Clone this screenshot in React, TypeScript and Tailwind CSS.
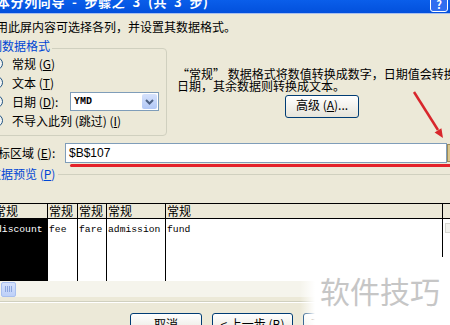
const Radio = ({ checked }: { checked?: boolean }) => (
  <div className="w-[13px] h-[13px] shrink-0 rounded-full border border-[#1C5180] bg-gradient-to-br from-[#DCDCD5] to-white flex items-center justify-center">
    {checked && <div className="w-[5px] h-[5px] rounded-full bg-[#21A121]" />}
  </div>
);

const XpButton = ({ children, className = '' }: any) => (
  <div className={`h-[23px] border border-[#003C74] rounded-[3px] bg-gradient-to-b from-white to-[#E6E4DA] flex justify-center pt-[3px] ${className}`}>
    {children}
  </div>
);

export default function App() {
  return (
    <div className="relative w-[450px] h-[325px] overflow-hidden bg-[#ECE9D8] text-[12px] leading-[14px] text-black font-['Noto_Sans_CJK_SC','Liberation_Sans',sans-serif]">
      {/* title bar */}
      <div className="h-[13px] flex items-start bg-gradient-to-b from-[#0A5EEA] to-[#0350DC]">
        <span className="-mt-[5px] -ml-[3px] text-[13px] leading-[13px] font-bold text-white whitespace-pre tracking-[0.6px]">本分列向导  -  步骤之  3  (共  3  步)</span>
        <div className="ml-auto mr-[2px] -mt-[6px] w-[18px] h-[18px] rounded-[3px] border border-white bg-[#2F6DF0] flex items-end justify-center pb-[1px] text-white font-bold text-[11px] leading-[11px]">?</div>
      </div>
      <div className="h-px bg-[#A9C0EE]" />

      <div className="mt-[6px] -ml-[4px] whitespace-nowrap">用此屏内容可选择各列，并设置其数据格式。</div>

      {/* data format */}
      <div className="flex mt-[14px]">
        <div className="relative -ml-[20px] w-[187px] h-[88px] shrink-0 border border-[#D0D0BF] rounded-[4px] pt-[5px] pl-[9px]">
          <span className="absolute -top-[10px] left-[9px] bg-[#ECE9D8] pr-[2px] text-[#0046D5]">列数据格式</span>
          <div className="h-[19px] flex items-center">
            <Radio checked />
            <span className="ml-[9px]">常规 (<u>G</u>)</span>
          </div>
          <div className="h-[19px] flex items-center">
            <Radio />
            <span className="ml-[9px]">文本 (<u>T</u>)</span>
          </div>
          <div className="h-[19px] flex items-center">
            <Radio />
            <span className="ml-[9px] w-[58px]">日期 (<u>D</u>):</span>
            <div className="w-[89px] h-[19px] border border-[#7F9DB9] bg-white flex items-center">
              <span className="ml-[3px] font-['Liberation_Mono',monospace] font-bold text-[10px]">YMD</span>
              <div className="ml-auto mr-px w-[15px] h-[15px] rounded-[2px] bg-gradient-to-b from-[#D6E2FC] to-[#B2C8F6] flex items-center justify-center">
                <svg width="9" height="6" viewBox="0 0 9 6"><path d="M1 1l3.5 3.5L8 1" fill="none" stroke="#4D6185" strokeWidth="2" /></svg>
              </div>
            </div>
          </div>
          <div className="h-[19px] flex items-center">
            <Radio />
            <span className="ml-[9px] whitespace-nowrap">不导入此列 (跳过) (<u>I</u>)</span>
          </div>
        </div>

        <div className="ml-[10px] pt-[20px] whitespace-nowrap leading-[12px]">
          <div>“常规” 数据格式将数值转换成数字，日期值会转换成</div>
          <div>日期，其余数据则转换成文本。</div>
          <XpButton className="mt-[3px] ml-[108px] w-[74px] h-[19px] pt-[2px]">
            <span>高级 (<u>A</u>)...</span>
          </XpButton>
        </div>
      </div>

      {/* destination */}
      <div className="mt-[7px] h-[20px] flex items-center -ml-[14px]">
        <span className="w-[79px] shrink-0 whitespace-nowrap">目标区域 (<u>E</u>):</span>
        <div className="w-[382px] h-[20px] shrink-0 border border-[#7F9DB9] bg-white flex items-center pl-[3px] font-['Liberation_Sans',sans-serif]">$B$107</div>
        <div className="w-[8px] h-[18px] shrink-0 bg-[#D9C68C] border border-[#9C8B5A]" />
      </div>
      <div className="mt-px ml-[70px] h-[3px] rounded-l-full bg-[#E4232B]" />

      {/* preview */}
      <div className="mt-px -ml-[11px] flex items-center leading-[12px]">
        <span className="text-[#0046D5] whitespace-nowrap">数据预览 (<u>P</u>)</span>
        <div className="flex-1 h-px ml-[3px] bg-[#D0D0BF]" />
      </div>

      <div className="mt-[23px] -ml-[20px] w-[480px] border-t border-black">
        <div className="grid grid-cols-[68px_30px_29px_59px_277px_1fr] h-[15px] bg-[#ECE9D8] border-b border-black leading-[14px]">
          <span className="pl-[14px] border-r border-black">常规</span>
          <span className="pl-px border-r border-black">常规</span>
          <span className="pl-px border-r border-black">常规</span>
          <span className="pl-px border-r border-black">常规</span>
          <span className="pl-px border-r border-black">常规</span>
          <span />
        </div>
        <div className="grid grid-cols-[68px_30px_29px_59px_277px_1fr] h-[62px] bg-white font-['Liberation_Mono',monospace] text-[9.7px] leading-[12px]">
          <span className="pl-[16px] pt-[5px] bg-black text-white border-r border-black">discount</span>
          <span className="pl-px pt-[5px] border-r border-black">fee</span>
          <span className="pl-px pt-[5px] border-r border-black">fare</span>
          <span className="pl-px pt-[5px] border-r border-black">admission</span>
          <span className="pl-px pt-[5px] border-r border-black">fund</span>
          <span className="pt-[4px] pl-[2px]"><div className="w-[6px] h-[10px] border border-[#D6D6D0] bg-[#F2F2EE]" /></span>
        </div>
        {/* horizontal scrollbar */}
        <div className="h-[16px] bg-[#F5F4EC] flex items-center">
          <div className="ml-[5px] w-[15px] h-[15px] rounded-[2px] bg-gradient-to-b from-[#D6E2FC] to-[#B6CBF8] flex items-center justify-center">
            <svg width="6" height="9" viewBox="0 0 6 9"><path d="M5 1L1.5 4.5 5 8" fill="none" stroke="#4D6185" strokeWidth="2" /></svg>
          </div>
          <div className="ml-[1px] w-[15px] h-[15px] rounded-[2px] border border-[#A8BFEF] bg-gradient-to-b from-[#D6E2FC] to-[#BDD0F8] flex items-center justify-center gap-px">
            <div className="w-px h-[6px] bg-[#8CA6DE]" />
            <div className="w-px h-[6px] bg-[#8CA6DE]" />
            <div className="w-px h-[6px] bg-[#8CA6DE]" />
            <div className="w-px h-[6px] bg-[#8CA6DE]" />
          </div>
        </div>
      </div>

      <div className="mt-[4px] h-px bg-[#D0D0BF]" />
      <div className="h-px bg-white" />

      {/* buttons */}
      <div className="mt-[10px] ml-[130px] flex gap-[10px]">
        <XpButton className="w-[72px]"><span>取消</span></XpButton>
        <XpButton className="w-[81px]"><span>&lt; 上一步 (<u>B</u>)</span></XpButton>
        <XpButton className="w-[81px]"><span>下一步 (<u>N</u>) &gt;</span></XpButton>
      </div>

      {/* watermark */}
      <div className="absolute left-[300px] top-[257px] w-[150px] h-[68px] bg-gradient-to-r from-white/0 from-0% to-white to-[10%]">
        <div className="mt-[16px] ml-[20px] text-[30px] leading-[34px] text-[#C6C6C6] whitespace-nowrap">软件技巧</div>
      </div>

      {/* red arrow annotation */}
      <svg className="absolute left-0 top-0 pointer-events-none" width="450" height="325">
        <line x1="414" y1="92" x2="438" y2="130" stroke="#D8262C" strokeWidth="2.5" />
        <polygon points="443,138 434.6,132.6 441.4,128.2" fill="#D8262C" />
      </svg>
    </div>
  );
}
